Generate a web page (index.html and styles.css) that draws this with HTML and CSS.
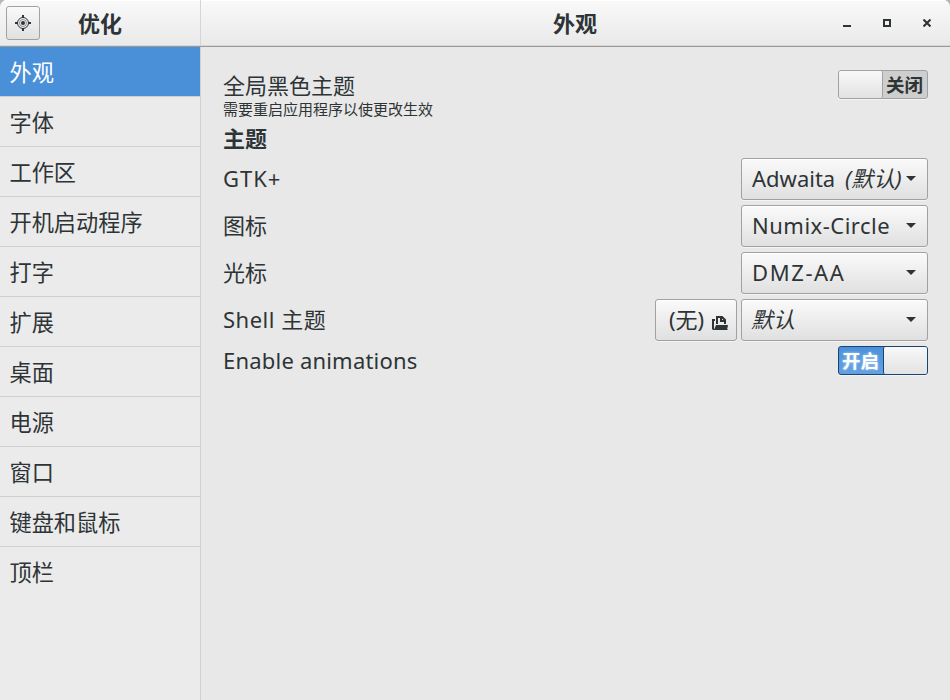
FILE: index.html
```html
<!DOCTYPE html>
<html lang="zh-CN">
<head>
<meta charset="utf-8">
<title>优化</title>
<link rel="stylesheet" href="styles.css">
</head>
<body>
<div class="window">
  <header class="titlebar">
    <div class="title-left">
      <button class="app-button" aria-label="优化">
        <svg width="16" height="16" viewBox="0 0 16 16" fill="none" stroke="#2e3436">
          <circle cx="8" cy="8" r="5.5" stroke-width="1"/>
          <circle cx="8" cy="8" r="3.5" stroke-width=".7" stroke-opacity=".7"/>
          <circle cx="8" cy="8" r="2" fill="#2e3436" stroke="none"/>
          <path d="M8 0v3M8 13v3M0 8h3M13 8h3" stroke-width="2"/>
        </svg>
      </button>
      <h1 class="app-title">优化</h1>
    </div>
    <div class="title-main">
      <h2 class="page-title">外观</h2>
      <div class="controls">
        <svg width="8" height="8" viewBox="0 0 8 8"><path d="M0 6h8v2H0z" fill="#2e3436"/></svg>
        <svg width="8" height="8" viewBox="0 0 8 8"><path d="M1 1h6v6H1z" fill="none" stroke="#2e3436" stroke-width="2"/></svg>
        <svg width="8" height="8" viewBox="0 0 8 8"><path d="M.5.5l7 7M7.500.5l-7 7" stroke="#2e3436" stroke-width="2.100"/></svg>
      </div>
    </div>
  </header>
  <div class="body">
    <nav class="sidebar">
      <a class="item selected">外观</a>
      <a class="item">字体</a>
      <a class="item">工作区</a>
      <a class="item">开机启动程序</a>
      <a class="item">打字</a>
      <a class="item">扩展</a>
      <a class="item">桌面</a>
      <a class="item">电源</a>
      <a class="item">窗口</a>
      <a class="item">键盘和鼠标</a>
      <a class="item last">顶栏</a>
    </nav>
    <main class="content">
      <div class="row dark-row">
        <div>
          <div class="label">全局黑色主题</div>
          <div class="hint">需要重启应用程序以使更改生效</div>
        </div>
        <div class="switch off"><span class="knob"></span><span class="state">关闭</span></div>
      </div>
      <h3 class="section">主题</h3>
      <div class="row combo-row"><span class="label gtk">GTK+</span>
        <button class="combo"><span>Adwaita <i class="note">(默认)</i></span><b class="arrow"></b></button></div>
      <div class="row combo-row"><span class="label">图标</span>
        <button class="combo"><span class="numix">Numix-Circle</span><b class="arrow"></b></button></div>
      <div class="row combo-row"><span class="label">光标</span>
        <button class="combo"><span class="dmz">DMZ-AA</span><b class="arrow"></b></button></div>
      <div class="row combo-row"><span class="label shell">Shell 主题</span>
        <div class="pair">
          <button class="combo file"><span>(无)</span>
            <svg width="16" height="16" viewBox="0 0 16 16">
              <path d="M0 4h3v2H2v8h14l-1 1H1L0 14z" fill="#2e3436"/>
              <path d="M5 9V2h5l3 3v4M9 2v4h4" fill="none" stroke="#2e3436" stroke-width="2"/>
              <path d="M4 10h12l-1 5H2z" fill="#2e3436"/>
            </svg>
          </button>
          <button class="combo"><i class="default">默认</i><b class="arrow"></b></button>
        </div></div>
      <div class="row anim-row"><span class="label anim">Enable animations</span>
        <div class="switch on"><span class="state">开启</span><span class="knob"></span></div></div>
    </main>
  </div>
</div>
</body>
</html>
```

FILE: styles.css
```css
* { box-sizing: border-box; }
body {
  margin: 0;
  background: #b5b5b5;
  color: #2e3436;
  font: 22px/30px "Noto Sans", "Noto Sans CJK SC", sans-serif;
}
h1, h2, h3 { margin: 0; font-size: 22px; line-height: 30px; font-weight: bold; }
.window {
  width: 950px;
  height: 700px;
  overflow: hidden;
  display: flex;
  flex-direction: column;
  background: #e8e8e8;
  border-radius: 7px 7px 0 0;
}
.titlebar {
  display: flex;
  height: 47px;
  flex: none;
  background: linear-gradient(#f9f9f9, #e9e9e9);
  border-bottom: 1px solid #999;
  box-shadow: inset 0 1px #fff, inset 0 -1px #d6d6d6;
}
.title-left {
  width: 201px;
  border-right: 1px solid #d5d5d5;
  display: flex;
  padding: 6px;
}
.app-button {
  width: 34px;
  height: 34px;
  padding: 0;
  display: flex;
  align-items: center;
  justify-content: center;
  border: 1px solid #a1a1a1;
  border-radius: 3px;
  background: linear-gradient(#fafafa, #e0e0e0);
}
.app-title { margin: 2px 0 0 38px; }
.title-main { flex: 1; display: flex; padding: 8px 19px 0 352px; justify-content: space-between; }
.controls { display: flex; gap: 32px; padding-top: 11px; }
.controls svg { display: block; }
.body { flex: 1; display: flex; }
.sidebar { width: 201px; background: #ebebeb; border-right: 1px solid #d0d0d0; }
.item {
  display: block;
  height: 50px;
  padding: 11px 9.5px 0;
  font-size: 22.2px;
  border-bottom: 1px solid #d0d0d0;
}
.selected { background: #4a90d9; color: #fff; }
.last { border: 0; }
.content { flex: 1; padding: 23px 22px 0; }
.row { display: flex; justify-content: space-between; }
.dark-row { height: 53px; }
.dark-row .label { line-height: 30px; }
.hint { font-size: 15px; line-height: 18px; }
.section { margin-bottom: 5px; }
.combo-row { height: 47px; align-items: flex-start; }
.combo-row .label { padding-top: 5px; }
.label { white-space: nowrap; }
.gtk { letter-spacing: 1px; }
.shell { letter-spacing: .5px; }
.anim { letter-spacing: .2px; }
.numix { letter-spacing: .5px; }
.dmz { letter-spacing: 1.6px; }
.note { margin-left: 4px; }
.default { margin-left: -1px; }
.combo {
  width: 187px;
  height: 42px;
  padding: 0 11px 2px 10px;
  display: flex;
  align-items: center;
  justify-content: space-between;
  font: inherit;
  color: inherit;
  white-space: nowrap;
  border: 1px solid #a1a1a1;
  border-radius: 3px;
  background: linear-gradient(#fafafa, #e0e0e0);
  box-shadow: inset 0 1px #fff, 0 1px #f4f4f4;
}
.arrow {
  margin: 1px 0 0 -4px;
  border: 5px solid transparent;
  border-top-color: #2e3436;
  border-bottom: 0;
}
.pair { display: flex; gap: 4px; }
.file { width: 82px; padding: 0 8px 2px 13px; }
.file svg { margin-top: 8px; }
.anim-row .label { line-height: 28px; }
.switch {
  width: 90px;
  height: 29px;
  display: flex;
  border: 1px solid #a1a1a1;
  border-radius: 3px;
  background: #cecece;
  font-size: 18.5px;
  font-weight: bold;
  line-height: 28px;
  box-shadow: 0 1px #f4f4f4;
}
.state { width: 44px; text-align: center; text-indent: -1px; }
.knob {
  width: 44px;
  border-right: 1px solid #a1a1a1;
  border-radius: 2px;
  background: linear-gradient(#f8f8f8, #e2e2e2);
}
.on {
  background: linear-gradient(#4a90d9, #63a0e1);
  border-color: #184472;
  color: #fff;
  text-shadow: 0 0 3px #b9d8f7;
}
.on .knob { border-right: 0; border-left: 1px solid #184472; }
```
